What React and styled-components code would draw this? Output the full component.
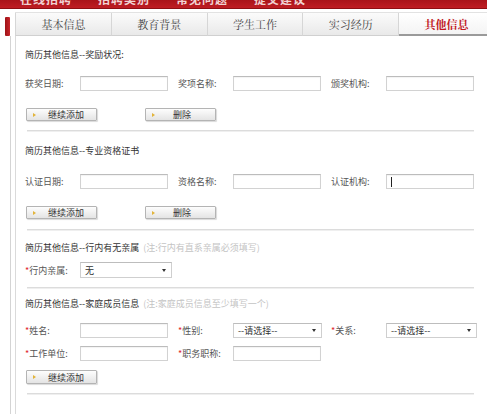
import React from "react";
import styled, { createGlobalStyle } from "styled-components";

const Global = createGlobalStyle`
  html, body { margin: 0; padding: 0; background: #fff; }
  body { width: 487px; height: 415px; overflow: hidden; font-family: "Noto Sans CJK SC", "Liberation Sans", sans-serif; }
  * { box-sizing: border-box; }
`;

const TopBar = styled.div`
  height: 9px;
  background: linear-gradient(#a9141a, #bf1d23);
  overflow: hidden;
  display: flex;
  gap: 26px;
  padding-left: 20px;
  border-bottom: 1px solid #8e0f14;
`;
const TopItem = styled.span`
  color: #f1d2d2;
  font-size: 12px;
  line-height: 12px;
  margin-top: -7px;
  font-weight: bold;
  letter-spacing: 1px;
`;

const Main = styled.div`
  display: flex;
`;
const Rail = styled.div`
  width: 11px;
  padding-left: 5px;
  padding-top: 8px;
`;
const Marker = styled.div`
  width: 5px;
  height: 19px;
  background: linear-gradient(90deg, #9d1217, #c9252b);
  border-radius: 1px;
`;
const Column = styled.div`
  flex: 1;
  display: flex;
  flex-direction: column;
`;
const Tabs = styled.div`
  margin-top: 3px;
  margin-left: 5px;
  margin-right: 2px;
  display: flex;
  height: 24px;
  border-top: 1px solid #e2e2e2;
`;
const Tab = styled.div`
  flex: 1;
  display: flex;
  align-items: center;
  justify-content: center;
  font-family: "Noto Serif CJK SC", "Noto Sans CJK SC", serif;
  font-size: 11px;
  color: ${p => (p.$active ? "#c1161d" : "#444")};
  font-weight: ${p => (p.$active ? "bold" : "normal")};
  background: ${p => (p.$active ? "linear-gradient(#ffffff, #f4f4f4)" : "linear-gradient(#fbfbfb, #e9e9e9)")};
  border-right: 1px solid #d6d6d6;
  border-bottom: ${p => (p.$active ? "2px solid #9a9a9a" : "1px solid #d0d0d0")};
  &:first-child { border-left: 1px solid #d6d6d6; }
`;
const Outer = styled.div`
  border-left: 1px solid #d4d4d4;
  padding-left: 4px;
  flex: 1;
`;
const Panel = styled.div`
  border-left: 1px solid #dadada;
  border-right: 1px solid #e4e4e4;
  margin-right: 2px;
  padding: 13px 10px 30px 9px;
  height: 378px;
  font-size: 9px;
  color: #444;
`;
const Title = styled.div`
  height: 12px;
  line-height: 12px;
  font-size: 9px;
  color: #333;
  margin-top: ${p => p.$mt || 0}px;
  white-space: nowrap;
`;
const Note = styled.span`
  color: #c4c4c4;
  margin-left: 4px;
`;
const Row = styled.div`
  display: flex;
  align-items: center;
  margin-top: ${p => p.$mt || 0}px;
`;
const Field = styled.div`
  display: flex;
  align-items: center;
  width: 153px;
  flex: none;
`;
const Label = styled.span`
  width: 55px;
  flex: none;
  color: #555;
  font-size: 9px;
  white-space: nowrap;
`;
const Star = styled.span`
  color: #e0272d;
`;
const Input = styled.div`
  width: ${p => p.$w || 88}px;
  height: ${p => p.$h || 15}px;
  border: 1px solid #d2d2d2;
  border-top-color: #bcbcbc;
  background: #fff;
  box-shadow: inset 0 1px 1px rgba(0,0,0,0.05);
  display: flex;
  align-items: center;
  padding-left: 4px;
`;
const Caret = styled.span`
  width: 1px;
  height: 10px;
  background: #222;
`;
const Select = styled.div`
  width: ${p => p.$w || 88}px;
  height: ${p => p.$h || 15}px;
  border: 1px solid #cfcfcf;
  border-top-color: #bdbdbd;
  background: #fff;
  display: flex;
  align-items: center;
  justify-content: space-between;
  padding: 0 5px 0 4px;
  font-size: 9px;
  color: #333;
`;
const Arrow = styled.span`
  width: 0;
  height: 0;
  border-left: 2px solid transparent;
  border-right: 2px solid transparent;
  border-top: 3px solid #333;
`;
const Buttons = styled.div`
  display: flex;
  gap: 48px;
  margin-top: ${p => p.$mt || 0}px;
  padding-left: 1px;
`;
const Button = styled.div`
  width: 71px;
  height: ${p => p.$h || 13}px;
  border: 1px solid #b4b4b4;
  border-radius: 1px;
  background: linear-gradient(#fdfdfd, #e4e4e4);
  box-shadow: 1px 1px 1px rgba(0,0,0,0.15);
  display: flex;
  align-items: center;
  font-size: 9px;
  color: #333;
  padding-left: 6px;
`;
const Tri = styled.span`
  width: 0;
  height: 0;
  border-top: 2px solid transparent;
  border-bottom: 2px solid transparent;
  border-left: 3px solid #e2b43a;
  margin-right: ${p => p.$gap || 12}px;
`;
const Sep = styled.div`
  height: 2px;
  background: #dcdcdc;
  border-bottom: 1px solid #efefef;
  margin: ${p => p.$mt || 0}px 0 0 2px;
  width: 447px;
`;

function Btn({ children, gap, h }) {
  return (
    <Button $h={h}>
      <Tri $gap={gap} />
      {children}
    </Button>
  );
}

function Fld({ label, star, children }) {
  return (
    <Field>
      <Label>
        {star && <Star>*</Star>}
        {label}
      </Label>
      {children}
    </Field>
  );
}

export default function App() {
  const tabs = ["基本信息", "教育背景", "学生工作", "实习经历", "其他信息"];
  return (
    <>
      <Global />
      <TopBar>
        <TopItem>在线招聘</TopItem>
        <TopItem>招聘类别</TopItem>
        <TopItem>常见问题</TopItem>
        <TopItem>提交建议</TopItem>
      </TopBar>
      <Main>
        <Rail>
          <Marker />
        </Rail>
        <Column>
          <Tabs>
            {tabs.map((t, i) => (
              <Tab key={t} $active={i === 4}>{t}</Tab>
            ))}
          </Tabs>
          <Outer>
            <Panel>
              <Title>简历其他信息--奖励状况:</Title>
              <Row $mt={15}>
                <Fld label="获奖日期:"><Input /></Fld>
                <Fld label="奖项名称:"><Input /></Fld>
                <Fld label="颁奖机构:"><Input /></Fld>
              </Row>
              <Buttons $mt={17}>
                <Btn>继续添加</Btn>
                <Btn gap={18}>删除</Btn>
              </Buttons>
              <Sep $mt={9} />

              <Title $mt={13}>简历其他信息--专业资格证书</Title>
              <Row $mt={17}>
                <Fld label="认证日期:"><Input /></Fld>
                <Fld label="资格名称:"><Input /></Fld>
                <Fld label="认证机构:"><Input><Caret /></Input></Fld>
              </Row>
              <Buttons $mt={17}>
                <Btn>继续添加</Btn>
                <Btn gap={18}>删除</Btn>
              </Buttons>
              <Sep $mt={10} />

              <Title $mt={11}>
                简历其他信息--行内有无亲属<Note>(注:行内有直系亲属必须填写)</Note>
              </Title>
              <Row $mt={8}>
                <Fld label="行内亲属:" star>
                  <Select $w={92} $h={16}>无<Arrow /></Select>
                </Fld>
              </Row>
              <Sep $mt={9} />

              <Title $mt={9}>
                简历其他信息--家庭成员信息<Note>(注:家庭成员信息至少填写一个)</Note>
              </Title>
              <Row $mt={13}>
                <Fld label="姓名:" star><Input /></Fld>
                <Fld label="性别:" star><Select $w={89}>--请选择--<Arrow /></Select></Fld>
                <Fld label="关系:" star><Select $w={91}>--请选择--<Arrow /></Select></Fld>
              </Row>
              <Row $mt={8}>
                <Fld label="工作单位:" star><Input /></Fld>
                <Fld label="职务职称:" star><Input /></Fld>
              </Row>
              <Buttons $mt={9}>
                <Btn h={14}>继续添加</Btn>
              </Buttons>
              <Sep $mt={9} />
            </Panel>
          </Outer>
        </Column>
      </Main>
    </>
  );
}
